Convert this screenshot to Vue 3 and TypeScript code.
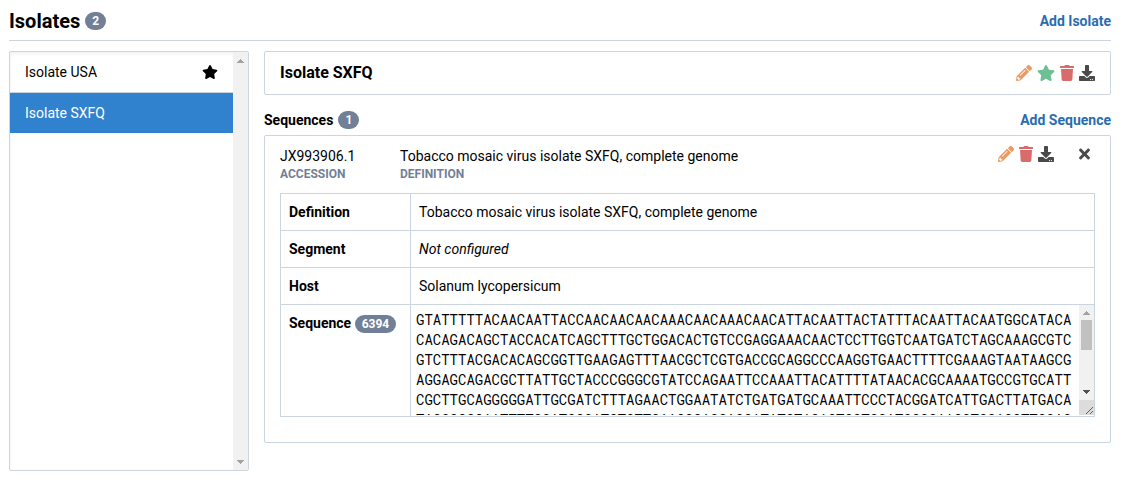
<script setup lang="ts">
import { ref } from 'vue'

interface Icon {
  box: string
  width: number
  path: string
}

interface Isolate {
  id: string
  name: string
  isDefault: boolean
}

const icons: Record<string, Icon> = {
  pencil: {
    box: '0 0 512 512',
    width: 16,
    path: 'M497.9 142.1l-46.1 46.1c-4.7 4.7-12.3 4.7-17 0l-111-111c-4.7-4.7-4.7-12.3 0-17l46.1-46.1c18.7-18.7 49.1-18.7 67.9 0l60.1 60.1c18.8 18.7 18.8 49.1 0 67.9zM284.2 99.8L21.6 362.4.4 483.9c-2.9 16.4 11.4 30.6 27.8 27.8l121.5-21.3 262.6-262.6c4.7-4.7 4.7-12.3 0-17l-111-111c-4.8-4.7-12.4-4.7-17.1 0zM124.1 339.9c-5.5-5.5-5.5-14.3 0-19.8l154-154c5.5-5.5 14.3-5.5 19.8 0s5.5 14.3 0 19.8l-154 154c-5.5 5.5-14.3 5.5-19.8 0zM88 424h48v36.3l-64.5 11.3-31.1-31.1L51.7 376H88v48z',
  },
  star: {
    box: '0 0 576 512',
    width: 18,
    path: 'M259.3 17.8L194 150.2 47.9 171.5c-26.2 3.8-36.7 36.1-17.7 54.6l105.7 103-25 145.5c-4.5 26.3 23.2 46 46.4 33.7L288 439.6l130.7 68.7c23.2 12.2 50.9-7.4 46.4-33.7l-25-145.5 105.7-103c19-18.5 8.5-50.8-17.7-54.6L382 150.2 316.7 17.8c-11.7-23.6-45.6-23.9-57.4 0z',
  },
  trash: {
    box: '0 0 448 512',
    width: 14,
    path: 'M432 32H312l-9.4-18.7A24 24 0 0 0 281.1 0H166.8a23.72 23.72 0 0 0-21.4 13.3L136 32H16A16 16 0 0 0 0 48v32a16 16 0 0 0 16 16h416a16 16 0 0 0 16-16V48a16 16 0 0 0-16-16zM53.2 467a48 48 0 0 0 47.9 45h245.8a48 48 0 0 0 47.9-45L416 128H32z',
  },
  download: {
    box: '0 0 512 512',
    width: 16,
    path: 'M216 0h80c13.3 0 24 10.7 24 24v168h87.7c17.8 0 26.7 21.5 14.1 34.1L269.7 378.3c-7.5 7.5-19.8 7.5-27.3 0L90.1 226.1c-12.6-12.6-3.7-34.1 14.1-34.1H192V24c0-13.3 10.7-24 24-24zm296 376v112c0 13.3-10.7 24-24 24H24c-13.3 0-24-10.7-24-24V376c0-13.3 10.7-24 24-24h146.7l49 49c20.1 20.1 52.5 20.1 72.6 0l49-49H488c13.3 0 24 10.7 24 24zm-124 88c0-11-9-20-20-20s-20 9-20 20 9 20 20 20 20-9 20-20zm64 0c0-11-9-20-20-20s-20 9-20 20 9 20 20 20 20-9 20-20z',
  },
  close: {
    box: '0 0 352 512',
    width: 11,
    path: 'M242.72 256l100.07-100.07c12.28-12.28 12.28-32.19 0-44.48l-22.24-22.24c-12.28-12.28-32.19-12.28-44.48 0L176 189.28 75.93 89.21c-12.28-12.28-32.19-12.28-44.48 0L9.21 111.45c-12.28 12.28-12.28 32.19 0 44.48L109.28 256 9.21 356.07c-12.28 12.28-12.28 32.19 0 44.48l22.24 22.24c12.28 12.28 32.2 12.28 44.48 0L176 322.72l100.07 100.07c12.28 12.28 32.2 12.28 44.48 0l22.24-22.24c12.28-12.28 12.28-32.19 0-44.48L242.72 256z',
  },
}

const isolateActions = ['pencil', 'star', 'trash', 'download']
const sequenceActions = ['pencil', 'trash', 'download', 'close']

const isolates: Isolate[] = [
  { id: 'usa', name: 'Isolate USA', isDefault: true },
  { id: 'sxfq', name: 'Isolate SXFQ', isDefault: false },
]
const activeId = ref('sxfq')

const fields = [
  { label: 'Definition', value: 'Tobacco mosaic virus isolate SXFQ, complete genome' },
  { label: 'Segment', value: '' },
  { label: 'Host', value: 'Solanum lycopersicum' },
]

const bases = [
  'GTATTTTTACAACAATTACCAACAACAACAAACAACAAACAACATTACAATTACTATTTACAATTACAATGGCATACA',
  'CACAGACAGCTACCACATCAGCTTTGCTGGACACTGTCCGAGGAAACAACTCCTTGGTCAATGATCTAGCAAAGCGTC',
  'GTCTTTACGACACAGCGGTTGAAGAGTTTAACGCTCGTGACCGCAGGCCCAAGGTGAACTTTTCGAAAGTAATAAGCG',
  'AGGAGCAGACGCTTATTGCTACCCGGGCGTATCCAGAATTCCAAATTACATTTTATAACACGCAAAATGCCGTGCATT',
  'CGCTTGCAGGGGGATTGCGATCTTTAGAACTGGAATATCTGATGATGCAAATTCCCTACGGATCATTGACTTATGACA',
  'TAGGCGGGAATTTTGCATCGCATCTGTTCAAGGGACGAGCATATGTACACTGCTGCATGCCCAACCTGGACGTTCGAG',
].join('')
</script>

<template>
  <main class="page">
    <header class="page-header">
      <h2>Isolates <span class="badge">2</span></h2>
      <a href="#">Add Isolate</a>
    </header>

    <div class="columns">
      <div class="isolates">
        <nav>
          <button
            v-for="isolate in isolates"
            :key="isolate.id"
            type="button"
            class="isolate"
            :class="{ active: isolate.id === activeId }"
            @click="activeId = isolate.id"
          >
            <span>{{ isolate.name }}</span>
            <svg v-if="isolate.isDefault" class="default-star" :viewBox="icons.star.box">
              <path :d="icons.star.path" />
            </svg>
          </button>
        </nav>
        <div class="scrollbar" aria-hidden="true">
          <svg class="arrow" viewBox="0 0 15 15"><path d="M4 11L7.5 7L11 11z" /></svg>
          <svg class="arrow last" viewBox="0 0 15 15"><path d="M4 5L7.5 9L11 5z" /></svg>
        </div>
      </div>

      <section class="detail">
        <div class="card isolate-title">
          <h3>Isolate SXFQ</h3>
          <div class="actions">
            <button v-for="name in isolateActions" :key="name" type="button" :class="name" :aria-label="name">
              <svg :width="icons[name].width" height="16" :viewBox="icons[name].box"><path :d="icons[name].path" /></svg>
            </button>
          </div>
        </div>

        <div class="sequences-header">
          <h4>Sequences <span class="badge">1</span></h4>
          <a href="#">Add Sequence</a>
        </div>

        <article class="card sequence">
          <div class="sequence-header">
            <div class="summary">
              <span>JX993906.1</span>
              <small>ACCESSION</small>
            </div>
            <div class="summary wide">
              <span>Tobacco mosaic virus isolate SXFQ, complete genome</span>
              <small>DEFINITION</small>
            </div>
            <div class="actions">
              <button v-for="name in sequenceActions" :key="name" type="button" :class="name" :aria-label="name">
                <svg :width="icons[name].width" height="16" :viewBox="icons[name].box"><path :d="icons[name].path" /></svg>
              </button>
            </div>
          </div>

          <table>
            <tbody>
              <tr v-for="field in fields" :key="field.label">
                <th scope="row">{{ field.label }}</th>
                <td>
                  <template v-if="field.value">{{ field.value }}</template>
                  <em v-else>Not configured</em>
                </td>
              </tr>
              <tr>
                <th scope="row"><label for="bases">Sequence <span class="badge">6394</span></label></th>
                <td class="bases-cell">
                  <div class="bases">
                    <textarea id="bases" readonly :value="bases"></textarea>
                    <div class="scrollbar" aria-hidden="true">
                      <svg class="arrow" viewBox="0 0 15 15"><path d="M4 10L7.5 6L11 10z" /></svg>
                      <span class="thumb"></span>
                      <svg class="arrow last enabled" viewBox="0 0 15 15"><path d="M4 5L7.5 9L11 5z" /></svg>
                      <svg class="grip" viewBox="0 0 15 15"><path d="M7 14L14 7M11 14L14 11" /></svg>
                    </div>
                  </div>
                </td>
              </tr>
            </tbody>
          </table>
        </article>
      </section>
    </div>
  </main>
</template>

<style>
body {
  margin: 0;
  background: #fff;
}
</style>

<style scoped>
* {
  box-sizing: border-box;
}

.page {
  padding: 10px 11px 13px 9px;
  font: 14px/20px Roboto, "Liberation Sans", sans-serif;
  color: #000;
}

h2, h3, h4 {
  display: flex;
  align-items: center;
  gap: 5px;
  margin: 0;
  font-size: 14px;
  font-weight: 700;
}

h2 {
  font-size: 20px;
}

h3 {
  font-size: 16px;
}

a {
  color: #2b6cb0;
  font-weight: 700;
  text-decoration: none;
}

button {
  padding: 0;
  border: 0;
  background: none;
  font: inherit;
  color: inherit;
  cursor: pointer;
}

svg {
  display: block;
  fill: currentColor;
}

.badge {
  display: inline-block;
  padding: 0 7px;
  border-radius: 9px;
  background: #718096;
  color: #fff;
  font-size: 12px;
  font-weight: 700;
  line-height: 18px;
}

.page-header,
.sequences-header {
  display: flex;
  align-items: center;
  justify-content: space-between;
}

.page-header {
  padding-bottom: 8px;
  border-bottom: 1px solid #cbd5e0;
  height: 31px;
}

.columns {
  display: grid;
  grid-template-columns: 240px 1fr;
  align-items: start;
  gap: 15px;
  margin-top: 10px;
}

.isolates {
  display: flex;
  height: 420px;
  border: 1px solid #cbd5e0;
  border-radius: 2px;
  box-shadow: inset 0 2px 4px rgba(0, 0, 0, 0.06);
}

.isolates nav {
  flex: 1;
  overflow-y: auto;
}

.isolate {
  display: flex;
  align-items: center;
  justify-content: space-between;
  width: 100%;
  padding: 10px 15px;
  border-bottom: 1px solid #cbd5e0;
  text-align: left;
}

.isolate.active {
  border-bottom: 0;
  background: #3182ce;
  color: #fff;
}

.default-star {
  width: 16px;
  height: 14px;
}

.scrollbar {
  display: flex;
  flex: none;
  flex-direction: column;
  width: 15px;
  background: #f1f1f1;
}

.arrow {
  flex: none;
  width: 15px;
  height: 15px;
  color: #a3a3a3;
  shape-rendering: crispEdges;
}

.arrow.last {
  margin-top: auto;
}

.arrow.enabled {
  color: #505050;
}

.thumb {
  height: 30px;
  margin: 0 2px;
  background: #c1c1c1;
}

.grip {
  flex: none;
  width: 15px;
  height: 15px;
  background: #dcdcdc;
  stroke: #606060;
  fill: none;
}

.card {
  border: 1px solid #cbd5e0;
  border-radius: 2px;
  padding: 0 15px;
}

.isolate-title {
  display: flex;
  align-items: center;
  justify-content: space-between;
  height: 44px;
}

.actions {
  display: flex;
  gap: 5px;
}

.pencil {
  color: #ea9a62;
}

.star {
  color: #6fbf95;
}

.trash {
  color: #d86c6c;
}

.download,
.close {
  color: #4a4a4a;
}

.close {
  margin: 0 5px 0 20px;
}

.sequences-header {
  margin: 15px 0 5px;
}

.sequence {
  padding: 10px 15px 25px;
}

.sequence-header {
  display: flex;
  align-items: flex-start;
  margin-bottom: 11px;
}

.summary {
  display: flex;
  flex-direction: column;
  width: 120px;
}

.summary.wide {
  flex: 1;
}

small {
  color: #718096;
  font-size: 12px;
  font-weight: 700;
  line-height: 16px;
}

table {
  width: 100%;
  border-collapse: collapse;
  table-layout: fixed;
}

th,
td {
  padding: 8px;
  border: 1px solid #cbd5e0;
  text-align: left;
  vertical-align: top;
}

th {
  width: 130px;
  font-weight: 700;
}

.bases-cell {
  padding: 0 0 1px;
}

.bases {
  display: flex;
  height: 110px;
}

textarea {
  flex: 1;
  min-width: 0;
  padding: 5px;
  border: 0;
  outline: 0;
  overflow-y: scroll;
  resize: none;
  background: #fff;
  color: #000;
  font: 14px/20px "Roboto Mono", "Liberation Mono", monospace;
  word-break: break-all;
}
</style>
